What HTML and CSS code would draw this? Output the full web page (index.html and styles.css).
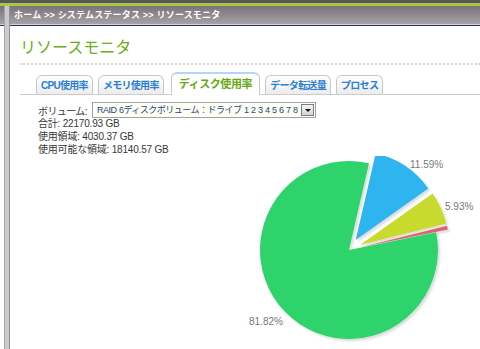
FILE: index.html
```html
<!DOCTYPE html>
<html lang="ja">
<head>
  <meta charset="UTF-8" />
  <title>リソースモニタ</title>
  <link rel="stylesheet" href="styles.css">
</head>
<body>
<div class="topbar"></div>
<div class="frame">
  <div class="side">
    <div class="side-head"></div>
  </div>
  <div class="rail"></div>
  <div class="main">
    <div class="crumb">ホーム &gt;&gt; システムステータス &gt;&gt; リソースモニタ</div>
    <div class="content">
      <h1 class="page-title">リソースモニタ</h1>

      <div class="tabs">
        <div class="tab">CPU使用率</div>
        <div class="tab">メモリ使用率</div>
        <div class="tab active">ディスク使用率</div>
        <div class="tab">データ転送量</div>
        <div class="tab">プロセス</div>
      </div>

      <div class="panel">
        <div class="volume-row">
          <span class="volume-label">ボリューム:</span>
          <div class="select">
            <span class="select-text">RAID 6ディスクボリューム：ドライブ 1 2 3 4 5 6 7 8</span>
            <span class="select-arrow"></span>
          </div>
        </div>
        <p class="stat">合計: 22170.93 GB</p>
        <p class="stat">使用領域: 4030.37 GB</p>
        <p class="stat">使用可能な領域: 18140.57 GB</p>
      </div>

      <svg class="chart" width="460" height="193" viewBox="20 156 460 193">
        <defs>
          <filter id="shadow" x="-20%" y="-20%" width="140%" height="140%">
            <feDropShadow dx="2" dy="2" stdDeviation="1" flood-color="#000" flood-opacity="0.14"/>
          </filter>
        </defs>
        <g filter="url(#shadow)">
          <path class="slice-green" d="M349 250 L436.21 232.26 A89 89 0 1 1 369.02 163.28 Z"/>
          <path class="slice-blue" d="M355.68 240.03 L375.70 153.31 A89 89 0 0 1 428.31 188.60 Z"/>
          <path class="slice-yellow" d="M359.91 244.99 L432.54 193.56 A89 89 0 0 1 446.27 223.46 Z"/>
          <path class="slice-red" d="M360.70 247.35 L447.06 225.82 A89 89 0 0 1 447.91 229.61 Z"/>
        </g>
        <text class="pct" x="410" y="168">11.59%</text>
        <text class="pct" x="445" y="210">5.93%</text>
        <text class="pct" x="249" y="325">81.82%</text>
      </svg>
    </div>
  </div>
</div>
</body>
</html>
```

FILE: styles.css
```css
body {
  margin: 0;
  font-family: "Liberation Sans", "Noto Sans CJK JP", sans-serif;
  background-color: #ffffff;
  color: #383838;
  width: 480px;
  height: 349px;
  overflow: hidden;
}

.topbar {
  height: 3px;
  background-color: #5b5759;
  border-bottom: 3px solid #a6c846;
}

.frame {
  display: flex;
  height: 343px;
}

.side {
  width: 4px;
  flex-shrink: 0;
}

.side-head {
  height: 18px;
  background: linear-gradient(#7a7278, #a6a2a6);
  border-bottom: 1px solid #d2d2da;
  box-shadow: 0 1px 0 #2c3652;
}

.rail {
  width: 4px;
  flex-shrink: 0;
  background-color: #cacaca;
  border-left: 1px solid #a4a4a4;
  border-right: 1px solid #929292;
}

.main {
  flex: 1;
  min-width: 0;
}

.crumb {
  height: 18px;
  line-height: 18px;
  padding-left: 4px;
  font-size: 9px;
  font-weight: bold;
  letter-spacing: 0.2px;
  color: #ffffff;
  background: linear-gradient(#7a7278, #a6a2a6);
  border-bottom: 1px solid #d2d2da;
  box-shadow: 0 1px 0 #2c3652;
  white-space: nowrap;
}

.content {
  padding-left: 10px;
}

.page-title {
  margin: 13px 0 0;
  padding-bottom: 5px;
  font-size: 16px;
  line-height: 20px;
  font-weight: normal;
  color: #6cad1c;
  border-bottom: 2px dotted #dcd8c8;
}

.tabs {
  display: flex;
  align-items: flex-end;
  gap: 5px;
  margin-top: 7px;
  padding-left: 16px;
  height: 22px;
  border-bottom: 1px solid #cccccc;
}

.tab {
  height: 18px;
  line-height: 19px;
  padding: 0 4px;
  font-size: 10px;
  font-weight: bold;
  letter-spacing: -0.7px;
  color: #2b80d2;
  border: 1px solid #c8c8c8;
  border-bottom: none;
  border-radius: 6px 6px 0 0;
  background: linear-gradient(#ffffff, #ececec);
}

.tab.active {
  height: 21px;
  line-height: 21px;
  padding: 0 7px;
  margin: 0 0 -1px 2px;
  font-size: 11px;
  letter-spacing: -0.4px;
  color: #66a80e;
  background: #ffffff;
  border-top: 2px solid #b4d6f2;
}

.panel {
  padding: 7px 0 0 18px;
}

.volume-row {
  display: flex;
  align-items: center;
  gap: 5px;
  margin-bottom: -1px;
  font-size: 10px;
}

.volume-label {
  letter-spacing: -0.6px;
  color: #383838;
}

.select {
  display: flex;
  align-items: center;
  justify-content: space-between;
  width: 217px;
  height: 14px;
  padding: 0 1px 0 4px;
  border: 1px solid #9aa4b0;
  background-color: #fffff2;
}

.select-text {
  font-size: 9px;
  line-height: 14px;
  letter-spacing: -0.5px;
  word-spacing: 0.5px;
  color: #23468a;
  white-space: nowrap;
  overflow: hidden;
}

.select-arrow {
  position: relative;
  width: 11px;
  height: 10px;
  flex-shrink: 0;
  background: linear-gradient(#f4f4f4, #d4d4d4);
  border: 1px solid #7c7c7c;
}

.select-arrow::after {
  content: "";
  position: absolute;
  left: 3px;
  top: 4px;
  border-left: 3px solid transparent;
  border-right: 3px solid transparent;
  border-top: 3px solid #111111;
}

.stat {
  margin: 0;
  font-size: 10px;
  line-height: 13px;
  letter-spacing: -0.2px;
  color: #383838;
}

.chart {
  display: block;
}

.slice-green { fill: #2fd36c; }
.slice-blue { fill: #2db4ee; }
.slice-yellow { fill: #c9da2e; }
.slice-red { fill: #d9666c; }

.pct {
  font-family: "Liberation Sans", sans-serif;
  font-size: 10px;
  fill: #787878;
}
```
